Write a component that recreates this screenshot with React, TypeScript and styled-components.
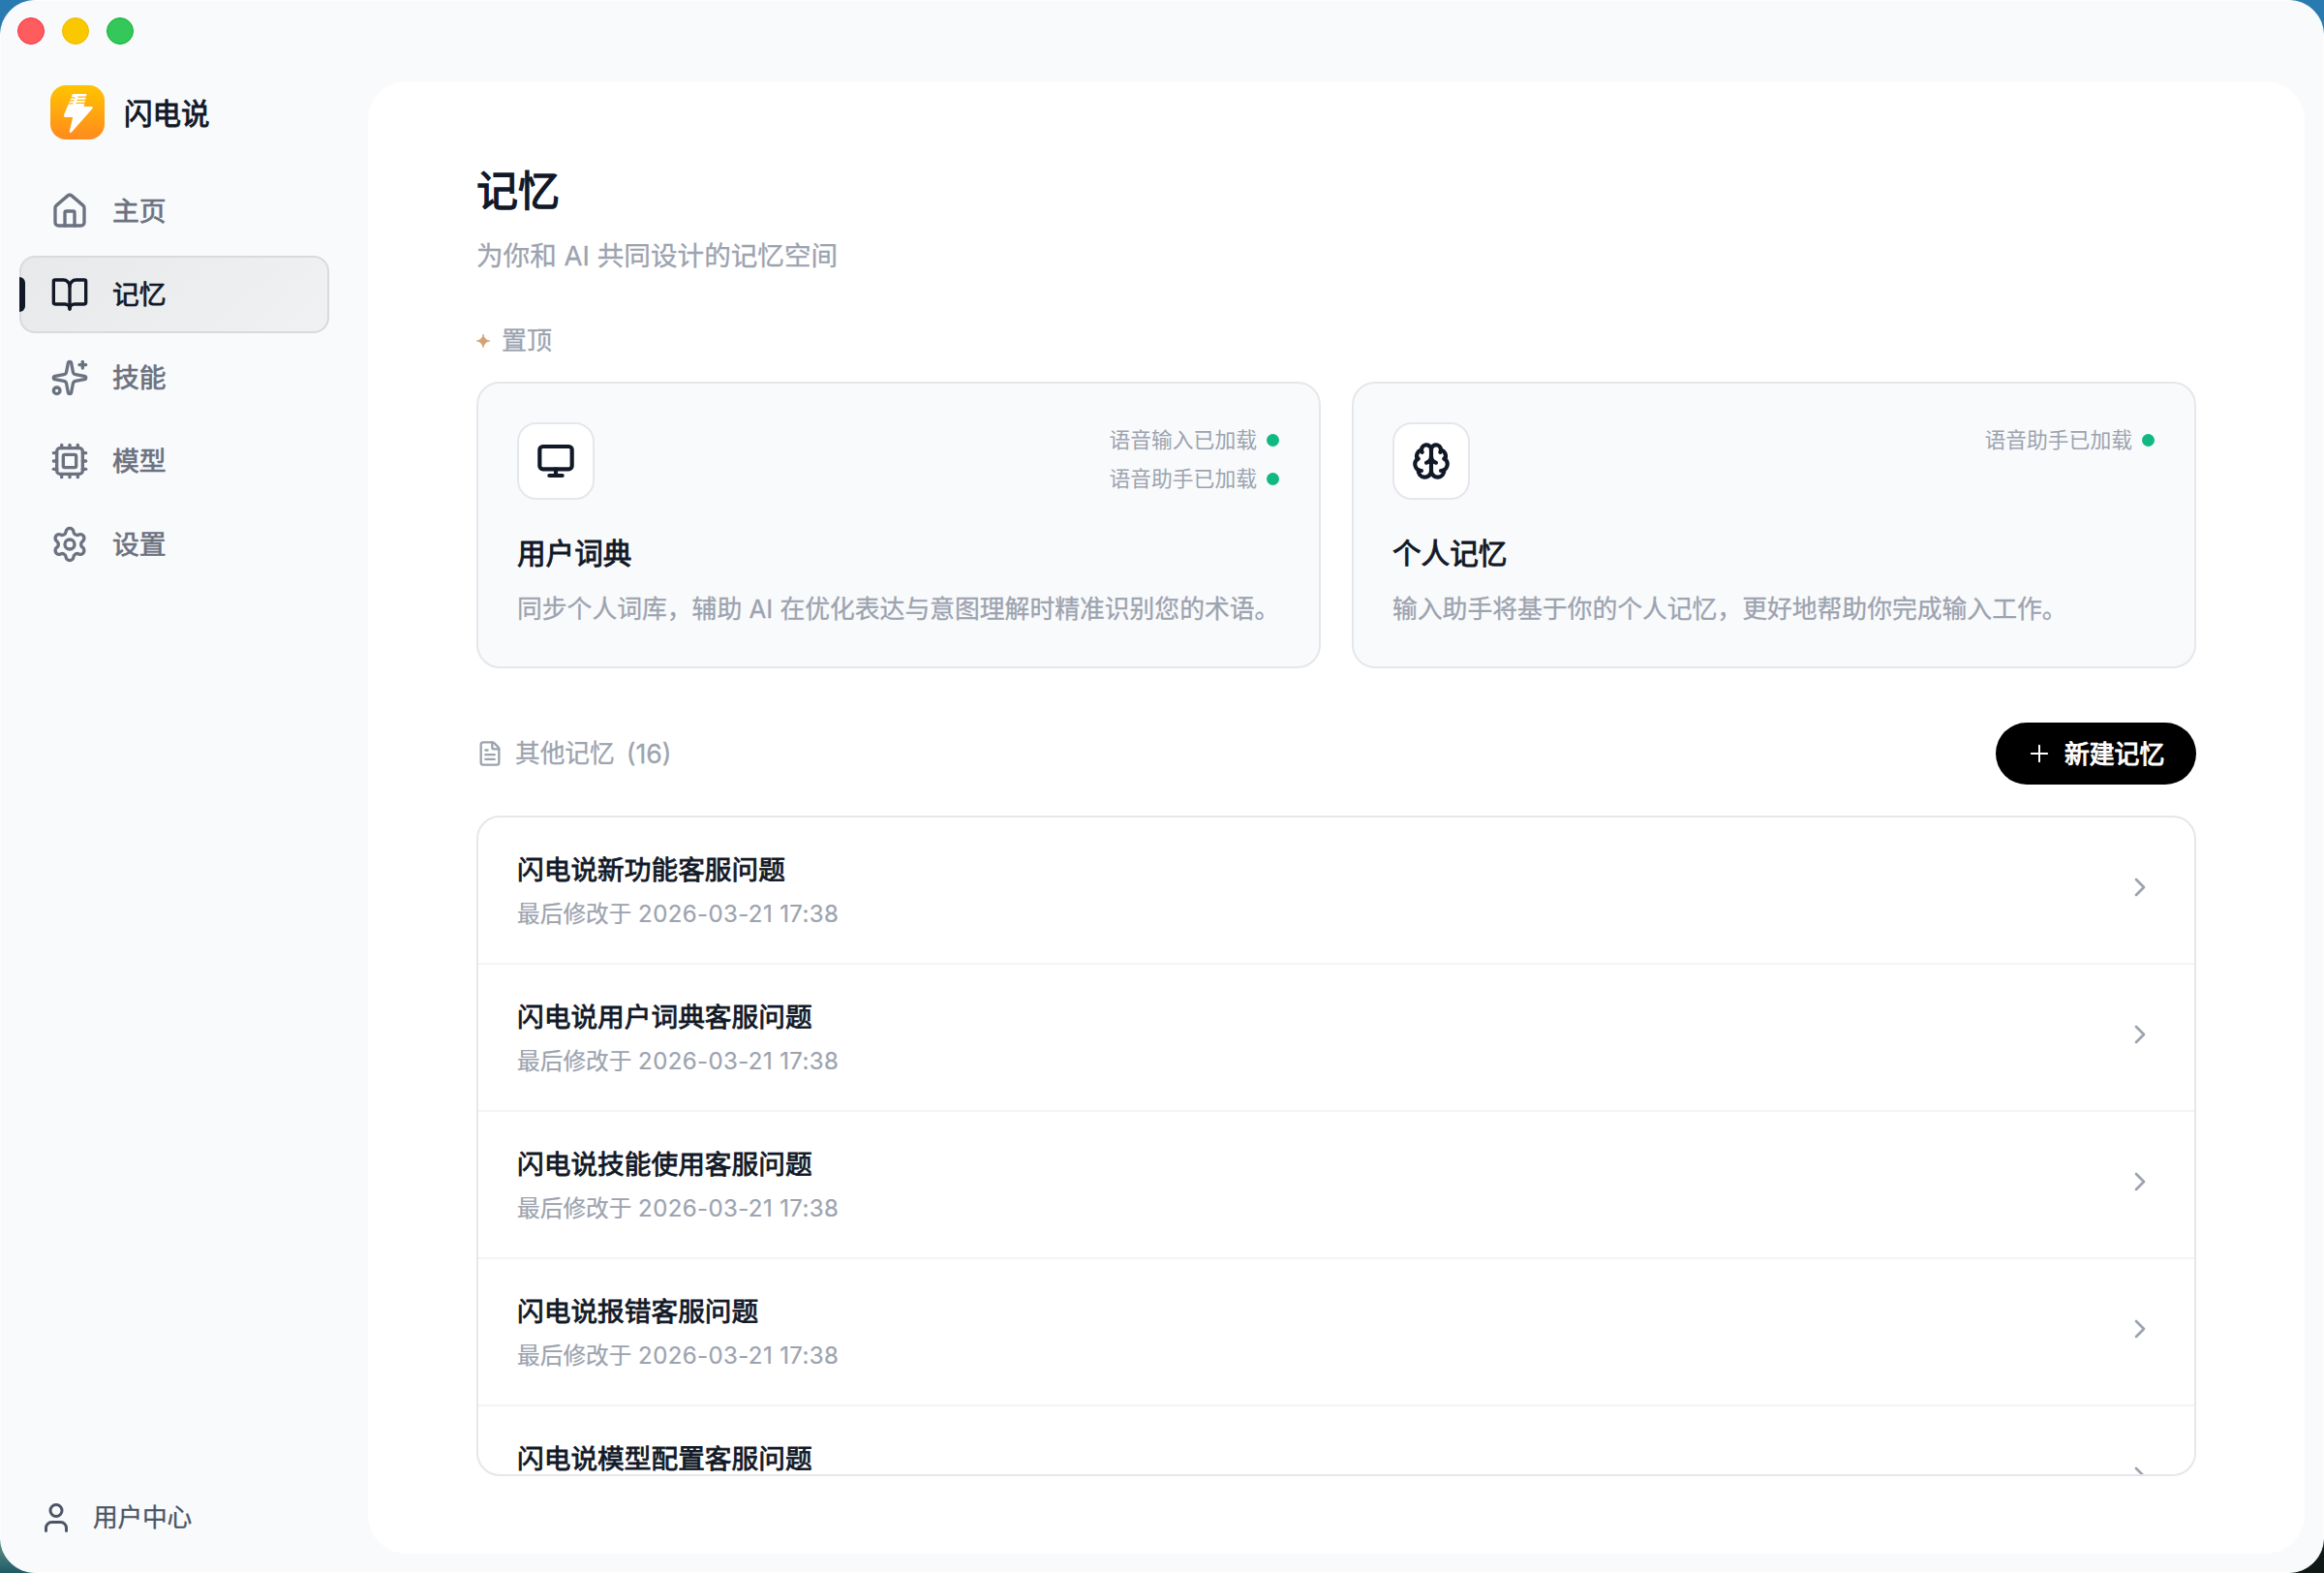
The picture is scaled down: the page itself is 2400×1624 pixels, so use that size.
import React from "react";
import styled, { createGlobalStyle, css } from "styled-components";
import {
  BookOpen,
  Brain,
  ChevronRight,
  Cpu,
  FileText,
  House,
  Monitor,
  Plus,
  Settings,
  Sparkles,
  User,
} from "lucide-react";

const GlobalStyle = createGlobalStyle`
  *, *::before, *::after { box-sizing: border-box; }
  body {
    margin: 0;
    font-family: Inter, "Noto Sans CJK SC", sans-serif;
    color: #111827;
  }
  h1, h2, h3, p { margin: 0; font-weight: 400; }
  button { font-family: inherit; border: 0; background: none; padding: 0; }
`;

/* Strengthens the regular cut to stand between regular and bold. */
const medium = (width: string) => css`
  -webkit-text-stroke: ${width} currentColor;
`;

const Desktop = styled.div`
  width: 2400px;
  height: 1624px;
  background: linear-gradient(180deg, #2a7ab2 0%, #2a7ab2 50%, #4f8580 98.5%, #1f5a66 100%);
  overflow: hidden;
`;

const DesktopRight = styled.div`
  height: 100%;
  background: linear-gradient(135deg, transparent 70%, #101817 72%);
`;

const Window = styled.div`
  height: 100%;
  display: grid;
  grid-template-columns: 379px 1fr;
  background: #f9fafc;
  border: 1px solid #fdfdfe;
  border-radius: 36px;
`;

const Sidebar = styled.aside`
  display: flex;
  flex-direction: column;
  padding: 17px 40px 22px 19px;
`;

const TrafficLights = styled.div`
  display: flex;
  gap: 18px;
  margin-left: -2px;
`;

const Light = styled.span<{ $fill: string; $edge: string }>`
  width: 28px;
  height: 28px;
  border-radius: 50%;
  background: ${(p) => p.$fill};
  border: 1px solid ${(p) => p.$edge};
`;

const Brand = styled.div`
  display: flex;
  align-items: center;
  gap: 20px;
  height: 56px;
  margin: 42px 0 34px 32px;
`;

const BrandName = styled.span`
  padding-top: 2px;
  font-size: 29.5px;
  line-height: 40px;
  ${medium("0.9px")}
`;

const Nav = styled.nav`
  display: flex;
  flex-direction: column;
  gap: 6px;
`;

const NavItem = styled.button<{ $active: boolean }>`
  position: relative;
  display: flex;
  align-items: center;
  gap: 24px;
  height: 80px;
  padding: 0 30px;
  border: 2px solid ${(p) => (p.$active ? "#d8dadc" : "transparent")};
  border-radius: 16px;
  background: ${(p) => (p.$active ? "linear-gradient(135deg, #e8e9eb, #f0f1f3)" : "none")};
  color: ${(p) => (p.$active ? "#111827" : "#6b7280")};
  font-size: 27.8px;
  line-height: 40px;
  ${medium("0.7px")}
`;

const ActiveMark = styled.span`
  position: absolute;
  left: -2px;
  top: 20px;
  width: 6px;
  height: 36px;
  border-radius: 0 6px 6px 0;
  background: #111827;
`;

const UserCenter = styled.button`
  display: flex;
  align-items: center;
  gap: 20px;
  height: 68px;
  margin-top: auto;
  padding: 0 20px;
  color: #4b5563;
  font-size: 25.7px;
  line-height: 36px;
  letter-spacing: -0.2px;
  ${medium("0.3px")}
`;

const Main = styled.main`
  display: flex;
  flex-direction: column;
  margin: 83px 19px 19px 0;
  padding: 81px 112px 80px;
  border-radius: 40px;
  background: #ffffff;
`;

const PageTitle = styled.h1`
  font-size: 43px;
  line-height: 64px;
  ${medium("1.3px")}
`;

const PageSubtitle = styled.p`
  margin-top: 13px;
  font-size: 27.6px;
  line-height: 44px;
  color: #9ca3af;
  ${medium("0.3px")}
`;

const PinnedLabel = styled.h2`
  display: flex;
  align-items: center;
  gap: 12px;
  height: 40px;
  margin: 46px 0 22px;
  font-size: 26px;
  line-height: 40px;
  color: #9ca3af;
  ${medium("0.3px")}
`;

const CardGrid = styled.div`
  display: grid;
  grid-template-columns: 1fr 1fr;
  gap: 32px;
`;

const Card = styled.article`
  height: 296px;
  padding: 40px;
  border: 2px solid #e5e7eb;
  border-radius: 24px;
  background: #f9fafc;
`;

const CardTop = styled.div`
  display: flex;
  justify-content: space-between;
`;

const IconBox = styled.div`
  display: grid;
  place-items: center;
  width: 80px;
  height: 80px;
  border: 2px solid #e5e7eb;
  border-radius: 20px;
  background: #ffffff;
`;

const StatusList = styled.div`
  display: flex;
  flex-direction: column;
  margin-top: -2px;
`;

const Status = styled.span`
  display: flex;
  align-items: center;
  gap: 10px;
  height: 40px;
  padding-right: 1px;
  font-size: 21.8px;
  line-height: 40px;
  color: #9ca3af;
`;

const Dot = styled.i`
  width: 13px;
  height: 13px;
  border-radius: 50%;
  background: #10b981;
`;

const CardTitle = styled.h3`
  margin-top: 33px;
  font-size: 29.6px;
  line-height: 44px;
  ${medium("0.9px")}
`;

const CardText = styled.p`
  margin-top: 16px;
  font-size: 25.8px;
  line-height: 40px;
  color: #9ca3af;
  white-space: nowrap;
  ${medium("0.3px")}
`;

const SectionBar = styled.div`
  display: flex;
  align-items: center;
  justify-content: space-between;
  height: 64px;
  margin: 56px 0 32px;
`;

const SectionLabel = styled.h2`
  display: flex;
  align-items: center;
  gap: 12px;
  font-size: 25.7px;
  line-height: 40px;
  color: #9ca3af;
  ${medium("0.3px")}
`;

const Count = styled.span`
  font-size: 26.6px;
`;

const CreateButton = styled.button`
  display: flex;
  align-items: center;
  gap: 12px;
  width: 207px;
  height: 64px;
  padding: 0 0 0 31px;
  border-radius: 32px;
  background: #000000;
  color: #ffffff;
  font-size: 25.8px;
  line-height: 40px;
  white-space: nowrap;
  ${medium("1px")}
`;

const ButtonText = styled.span`
  padding-top: 2px;
`;

const MemoryList = styled.div`
  height: 682px;
  border: 2px solid #e5e7eb;
  border-radius: 24px;
  overflow: hidden;
`;

const MemoryRow = styled.div`
  display: flex;
  align-items: flex-start;
  justify-content: space-between;
  height: 152px;
  padding: 32px 40px 0;
  border-bottom: 2px solid #f3f4f6;
  color: #9ca3af;
`;

const RowTitle = styled.h3`
  color: #111827;
  font-size: 27.7px;
  line-height: 44px;
  ${medium("0.8px")}
`;

const RowMeta = styled.p`
  margin-top: 4px;
  font-size: 23.7px;
  line-height: 40px;
  ${medium("0.2px")}
`;

const Timestamp = styled.time`
  font-size: 24px;
  letter-spacing: 0.4px;
`;

const RowChevron = styled(ChevronRight)`
  margin-top: 24px;
`;

function BoltLogo() {
  return (
    <svg width="56" height="56" viewBox="0 0 56 56">
      <defs>
        <linearGradient id="amber" x1="0" y1="0" x2="0" y2="1">
          <stop offset="0" stopColor="#ffc400" />
          <stop offset="1" stopColor="#ff8a1e" />
        </linearGradient>
      </defs>
      <rect width="56" height="56" rx="16" fill="url(#amber)" />
      <path
        d="M23 9H37.500L34.500 22H43q1.400.4.5 2L22.400 48q-2 2-2.700 0L23.200 33H15.200q-1.800-.4-1.100-2.500Z"
        fill="#fff"
      />
      <path
        d="M20 12.800H25.500M28.500 12.200H39M19 15.800H24.500M27.500 15.300H38M17 18.900H23.500M26.500 18.400H37"
        stroke="#ffb60a"
        strokeWidth="1.200"
      />
    </svg>
  );
}

const navItems = [
  { label: "主页", Icon: House },
  { label: "记忆", Icon: BookOpen },
  { label: "技能", Icon: Sparkles },
  { label: "模型", Icon: Cpu },
  { label: "设置", Icon: Settings },
];

const pinned = [
  {
    title: "用户词典",
    text: "同步个人词库，辅助 AI 在优化表达与意图理解时精准识别您的术语。",
    Icon: Monitor,
    statuses: ["语音输入已加载", "语音助手已加载"],
  },
  {
    title: "个人记忆",
    text: "输入助手将基于你的个人记忆，更好地帮助你完成输入工作。",
    Icon: Brain,
    statuses: ["语音助手已加载"],
  },
];

const memories = [
  "闪电说新功能客服问题",
  "闪电说用户词典客服问题",
  "闪电说技能使用客服问题",
  "闪电说报错客服问题",
  "闪电说模型配置客服问题",
];

export default function App() {
  return (
    <Desktop>
      <GlobalStyle />
      <DesktopRight>
        <Window>
          <Sidebar>
            <TrafficLights>
              <Light $fill="#ff5c60" $edge="#fb2c3c" />
              <Light $fill="#fac800" $edge="#eebb00" />
              <Light $fill="#34c759" $edge="#0fb32f" />
            </TrafficLights>
            <Brand>
              <BoltLogo />
              <BrandName>闪电说</BrandName>
            </Brand>
            <Nav>
              {navItems.map(({ label, Icon }) => (
                <NavItem key={label} $active={label === "记忆"}>
                  {label === "记忆" && <ActiveMark />}
                  <Icon size={40} strokeWidth={2} />
                  {label}
                </NavItem>
              ))}
            </Nav>
            <UserCenter>
              <User size={36} strokeWidth={2} />
              用户中心
            </UserCenter>
          </Sidebar>
          <Main>
            <PageTitle>记忆</PageTitle>
            <PageSubtitle>为你和 AI 共同设计的记忆空间</PageSubtitle>
            <PinnedLabel>
              <svg width="14" height="14" viewBox="0 0 14 14">
                <path d="M7 0Q8 6 14 7Q8 8 7 14Q6 8 0 7Q6 6 7 0Z" fill="#d4a373" stroke="#d4a373" strokeWidth="0.600" />
              </svg>
              置顶
            </PinnedLabel>
            <CardGrid>
              {pinned.map(({ title, text, Icon, statuses }) => (
                <Card key={title}>
                  <CardTop>
                    <IconBox>
                      <Icon size={40} strokeWidth={2.5} />
                    </IconBox>
                    <StatusList>
                      {statuses.map((s) => (
                        <Status key={s}>
                          {s}
                          <Dot />
                        </Status>
                      ))}
                    </StatusList>
                  </CardTop>
                  <CardTitle>{title}</CardTitle>
                  <CardText>{text}</CardText>
                </Card>
              ))}
            </CardGrid>
            <SectionBar>
              <SectionLabel>
                <FileText size={28} strokeWidth={2} />
                <span>其他记忆</span>
                <Count>(16)</Count>
              </SectionLabel>
              <CreateButton>
                <Plus size={28} strokeWidth={1.7} />
                <ButtonText>新建记忆</ButtonText>
              </CreateButton>
            </SectionBar>
            <MemoryList>
              {memories.map((m) => (
                <MemoryRow key={m}>
                  <div>
                    <RowTitle>{m}</RowTitle>
                    <RowMeta>
                      最后修改于 <Timestamp>2026-03-21 17:38</Timestamp>
                    </RowMeta>
                  </div>
                  <RowChevron size={32} strokeWidth={2} />
                </MemoryRow>
              ))}
            </MemoryList>
          </Main>
        </Window>
      </DesktopRight>
    </Desktop>
  );
}
